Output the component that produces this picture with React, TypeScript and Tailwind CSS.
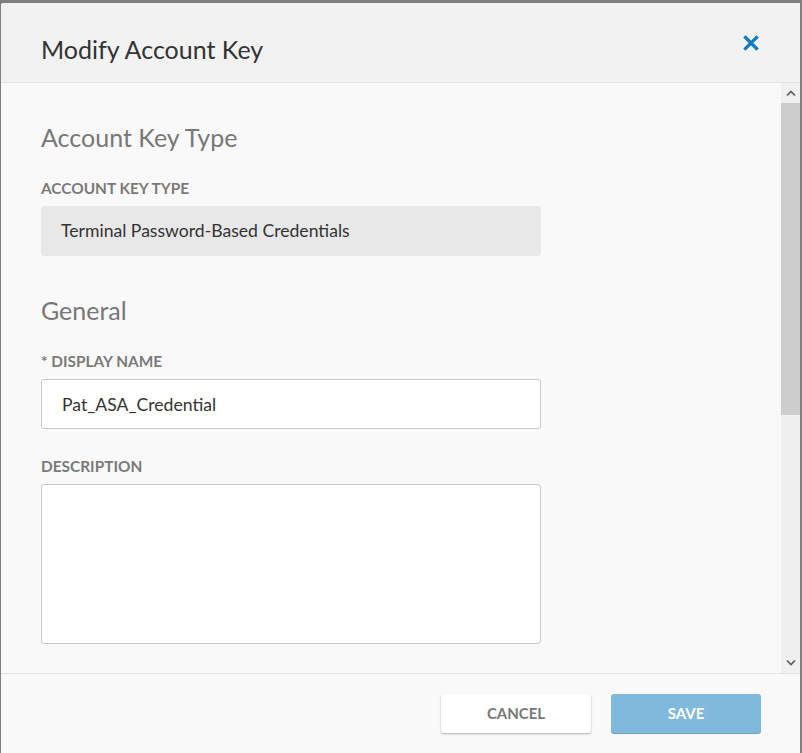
import React, { useState } from 'react';

function ScrollArrow({ up }: { up?: boolean }) {
  return (
    <svg width="10" height="6" viewBox="0 0 10 6" className={up ? '' : 'rotate-180'}>
      <path d="M1 5.5 L5 1.5 L9 5.5" fill="none" stroke="#5a5a5a" strokeWidth="1.6" />
    </svg>
  );
}

function Label({ children, className = '' }: { children: React.ReactNode; className?: string }) {
  return <div className={`text-[15.4px] font-bold text-[#7a7a7a] leading-[18px] mb-[9px] ${className}`}>{children}</div>;
}

export default function App() {
  const [name, setName] = useState('Pat_ASA_Credential');
  const [description, setDescription] = useState('');

  return (
    <div
      className="w-[802px] h-[753px] bg-[#7f7f7f] pt-[3px] pl-[1px] pr-[2px] overflow-hidden"
      style={{ fontFamily: 'Lato, "Open Sans", sans-serif' }}
    >
      <div className="h-full flex flex-col bg-[#f9f9f9] rounded-tl-[3px] overflow-hidden">
        {/* header */}
        <div className="h-[80px] shrink-0 flex items-center justify-between bg-[#f2f2f2] border-b border-[#e3e3e3] pl-[40px] pr-[41px]">
          <h2 className="text-[25px] text-[#333] leading-none pt-[13px]">Modify Account Key</h2>
          <button>
            <svg width="16" height="16" viewBox="0 0 16 16">
              <path d="M2.5 2.5 L13.5 13.5 M13.5 2.5 L2.5 13.5" stroke="#0f7cc1" strokeWidth="3.2" strokeLinecap="square" />
            </svg>
          </button>
        </div>

        {/* body */}
        <div className="flex-1 flex min-h-0">
          <div className="flex-1 overflow-hidden pl-[40px] pt-[40px]">
            <h3 className="text-[25px] text-[#777] leading-[28px] mb-[28px]">Account Key Type</h3>
            <Label>ACCOUNT KEY TYPE</Label>
            <div className="w-[500px] h-[50px] bg-[#e8e8e8] rounded-[3px] flex items-center pl-[20px] text-[17.6px] text-[#333]">
              Terminal Password-Based Credentials
            </div>

            <h3 className="text-[25px] text-[#777] leading-[28px] mt-[40px] mb-[28px]">General</h3>
            <Label>* DISPLAY NAME</Label>
            <input
              value={name}
              onChange={(e) => setName(e.target.value)}
              className="block w-[500px] h-[50px] bg-white border border-[#c9c9c9] rounded-[3px] pl-[20px] text-[17.6px] text-[#333] outline-none"
            />

            <Label className="mt-[28px]">DESCRIPTION</Label>
            <textarea
              value={description}
              onChange={(e) => setDescription(e.target.value)}
              className="block w-[500px] h-[160px] bg-white border border-[#c9c9c9] rounded-[3px] p-[12px] text-[17.6px] text-[#333] outline-none resize-none"
            />
          </div>

          {/* scrollbar */}
          <div className="w-[19px] shrink-0 flex flex-col bg-[#f0f0f0]">
            <div className="h-[20px] flex items-center justify-center">
              <ScrollArrow up />
            </div>
            <div className="flex-1">
              <div className="h-[312px] bg-[#cdcdcd]" />
            </div>
            <div className="h-[20px] flex items-center justify-center">
              <ScrollArrow />
            </div>
          </div>
        </div>

        {/* footer */}
        <div className="h-[80px] shrink-0 border-t border-[#e3e3e3] flex items-center justify-end gap-[20px] pr-[39px]">
          <button className="w-[150px] h-[39px] bg-white rounded-[3px] shadow-[0_1px_2px_rgba(0,0,0,0.3)] text-[15px] font-bold text-[#777]">
            CANCEL
          </button>
          <button className="w-[150px] h-[39px] bg-[#80b9db] rounded-[3px] shadow-[0_1px_0_#6ea3c2] text-[15px] font-bold text-white">
            SAVE
          </button>
        </div>
      </div>
    </div>
  );
}
